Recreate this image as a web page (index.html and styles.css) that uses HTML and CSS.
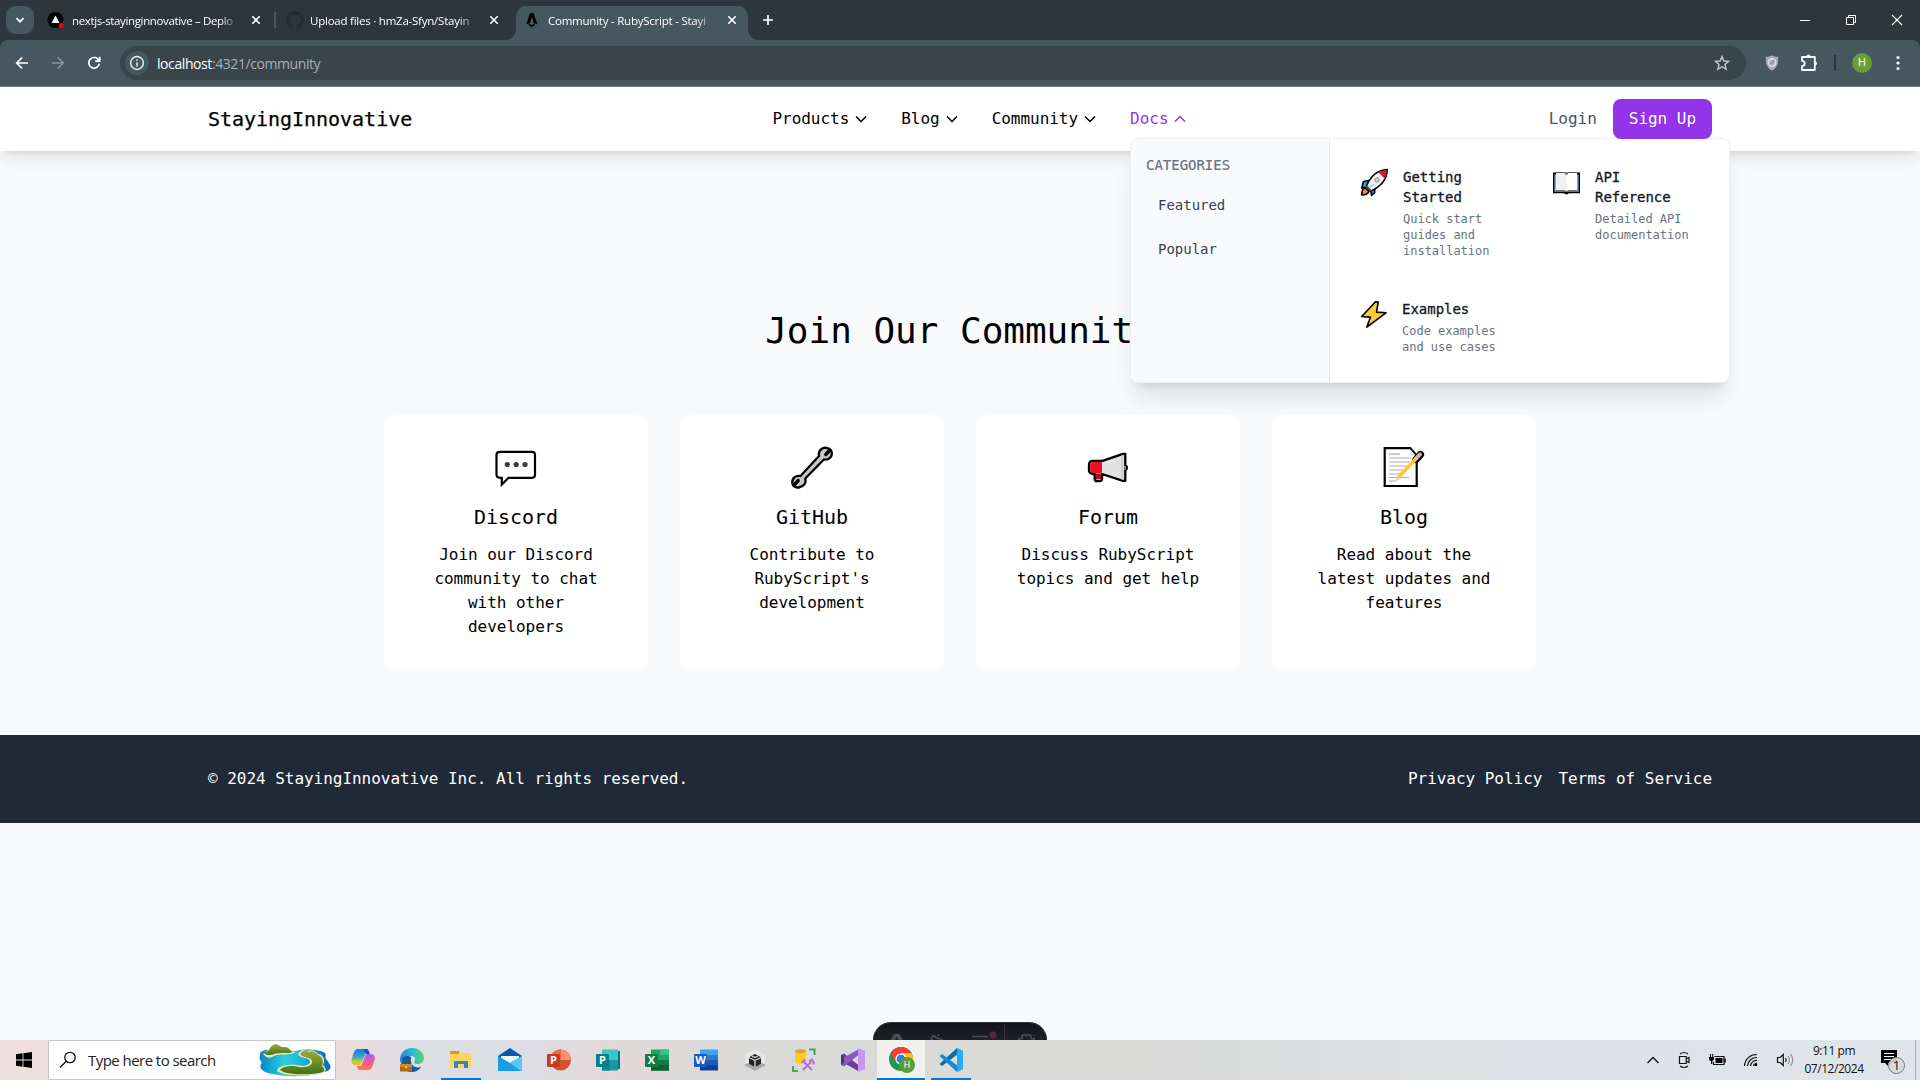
FILE: index.html
```html
<!DOCTYPE html>
<html lang="en">
<head>
<meta charset="utf-8">
<title>Community - RubyScript - StayingInnovative</title>
<link rel="stylesheet" href="styles.css">
</head>
<body>
<div class="tabstrip">
  <div class="tab-search"><svg width="12" height="12" viewBox="0 0 12 12"><path d="M2.5 4.2 6 7.7l3.500-3.500" fill="none" stroke="#fff" stroke-width="1.800"/></svg></div>
  <div class="tab tab-first">
    <svg width="18" height="18" viewBox="0 0 18 18"><circle cx="8.500" cy="9" r="8" fill="#000"/><path d="M8.500 4.500 12.500 12h-8z" fill="#fff"/><circle cx="14.200" cy="14.500" r="2.500" fill="#f00"/></svg>
    <span class="tab-title">nextjs-stayinginnovative – Deplo</span>
    <svg class="tab-x" width="10" height="10" viewBox="0 0 10 10"><path d="M1.300 1.300l7.400 7.400M8.700 1.300l-7.400 7.400" stroke="#fff" stroke-width="1.600"/></svg>
  </div>
  <i class="tab-sep"></i>
  <div class="tab tab-second">
    <svg width="18" height="18" viewBox="0 0 16 16"><path fill="#242b33" d="M8 0C3.580 0 0 3.580 0 8c0 3.540 2.290 6.530 5.470 7.590.4.070.55-.17.55-.38v-1.500c-2.010.37-2.530-.49-2.690-.94-.09-.23-.48-.94-.82-1.130-.28-.15-.68-.52-.01-.53.63-.01 1.080.58 1.230.82.72 1.210 1.870.87 2.330.66.070-.52.28-.87.51-1.070-1.780-.2-3.640-.89-3.640-3.950 0-.87.31-1.590.82-2.150-.08-.2-.36-1.020.08-2.120 0 0 .67-.21 2.200.82a7.400 7.400 0 0 1 4 0c1.530-1.040 2.200-.82 2.200-.82.44 1.100.16 1.920.08 2.120.51.56.82 1.270.82 2.150 0 3.070-1.870 3.750-3.650 3.950.29.25.54.73.54 1.480v2.200c0 .21.15.46.55.38A8 8 0 0 0 16 8c0-4.420-3.580-8-8-8z"/></svg>
    <span class="tab-title">Upload files · hmZa-Sfyn/Stayin</span>
    <svg class="tab-x" width="10" height="10" viewBox="0 0 10 10"><path d="M1.300 1.300l7.400 7.400M8.700 1.300l-7.400 7.400" stroke="#fff" stroke-width="1.600"/></svg>
  </div>
  <div class="tab tab-active">
    <svg width="14" height="16" viewBox="0 0 14 16"><path d="M5 1h3.500l4 11.500c-1.400-.7-2.400-1-3.700-1.200L6.800 4.800 4.900 11.300c-1.300.2-2.400.5-3.600 1.200z" fill="#000"/><path d="M3.700 12c1.500 1 4.500 1 6 0 .3 1.300-.6 2-1.400 2.500-.6-.5-1-.4-1.500 1.200-.4-1.400-1.400-1-1.900-1.700-.7-.4-1.400-1-1.200-2z" fill="#000"/></svg>
    <span class="tab-title">Community - RubyScript - Stayi</span>
    <svg class="tab-x" width="10" height="10" viewBox="0 0 10 10"><path d="M1.300 1.300l7.400 7.400M8.700 1.300l-7.400 7.400" stroke="#fff" stroke-width="1.600"/></svg>
  </div>
  <svg class="new-tab" width="12" height="12" viewBox="0 0 12 12"><path d="M6 1v10M1 6h10" stroke="#fff" stroke-width="1.700"/></svg>
  <div class="win-buttons">
    <svg width="12" height="12" viewBox="0 0 12 12"><path d="M1 6.500h10" stroke="#fff"/></svg>
    <svg width="12" height="12" viewBox="0 0 12 12"><path d="M1.500 3.500h7v7h-7zM3.500 3.500v-2h7v7h-2" fill="none" stroke="#fff"/></svg>
    <svg width="12" height="12" viewBox="0 0 12 12"><path d="M1 1l10 10M11 1 1 11" stroke="#fff" stroke-width="1.100"/></svg>
  </div>
</div>

<div class="toolbar-wrap"><div class="toolbar">
  <div class="nav-btns">
    <svg width="14" height="14" viewBox="0 0 14 14"><path d="M13 7H2M7.200 1.500 1.700 7l5.500 5.500" fill="none" stroke="#fff" stroke-width="1.700"/></svg>
    <svg width="14" height="14" viewBox="0 0 14 14"><path d="M1 7h11M6.800 1.500 12.300 7l-5.500 5.500" fill="none" stroke="#899499" stroke-width="1.700"/></svg>
    <svg width="14" height="14" viewBox="0 0 14 14"><path d="M12.300 7.700A5.300 5.300 0 1 1 11 3.200l1.500 1.500M12.700.8v4.400H8.200" fill="none" stroke="#fff" stroke-width="1.700"/></svg>
  </div>
  <div class="omnibox">
    <span class="site-info"><svg width="16" height="16" viewBox="0 0 16 16"><circle cx="8" cy="8" r="6.400" fill="none" stroke="#e8eced" stroke-width="1.500"/><path d="M8 7.200v4.200M8 4.400v1.600" stroke="#e8eced" stroke-width="1.500"/></svg></span>
    <span class="url"><b>localhost</b>:4321/community</span>
    <svg class="star" width="16" height="16" viewBox="0 0 16 16"><path d="M8 1.600l1.900 4.400 4.700.4-3.600 3.100 1.100 4.700L8 11.700l-4.100 2.500L5 9.500 1.400 6.400 6.100 6z" fill="none" stroke="#c3c7c9" stroke-width="1.400"/></svg>
  </div>
  <svg class="shield" width="14" height="16" viewBox="0 0 14 16"><path d="M7 .3c2 1.200 4 1.700 6.200 1.700C13.300 8 12.600 13 7 15.700 1.400 13 .7 8 .8 2 3 2 5 1.500 7 .3z" fill="#a3a8b8"/><circle cx="7" cy="7.500" r="3.900" fill="#b5bac8" stroke="#e4e6ed" stroke-width="1.200"/><path d="M4.500 9.300 9 5M6.500 9.500 9 7" stroke="#7c8298"/></svg>
  <svg class="ext" width="18" height="18" viewBox="0 0 18 18"><path d="M2 3h12.800v13H2v-3.800c3.600-.2 3.600-5.200 0-5.400z" fill="none" stroke="#fff" stroke-width="1.800" stroke-linejoin="round"/><path d="M6.500 2.500a2 2 0 0 1 4 0zM15 7.500a2 2 0 0 1 0 4z" fill="#fff"/></svg>
  <i class="tb-sep"></i>
  <span class="avatar">H</span>
  <svg class="dots" width="4" height="16" viewBox="0 0 4 16"><circle cx="2" cy="2.500" r="1.600" fill="#fff"/><circle cx="2" cy="8" r="1.600" fill="#fff"/><circle cx="2" cy="13.500" r="1.600" fill="#fff"/></svg>
</div></div>

<div class="page">
  <header class="site-header">
    <div class="container">
      <a class="brand">StayingInnovative</a>
      <nav class="main-nav">
        <a>Products<svg width="16" height="16" viewBox="0 0 16 16"><path d="M3 5.500l5 5 5-5"/></svg></a>
        <a>Blog<svg width="16" height="16" viewBox="0 0 16 16"><path d="M3 5.500l5 5 5-5"/></svg></a>
        <a>Community<svg width="16" height="16" viewBox="0 0 16 16"><path d="M3 5.500l5 5 5-5"/></svg></a>
        <div class="docs">
          <a class="open">Docs<svg width="16" height="16" viewBox="0 0 16 16"><path d="M3 10.500l5-5 5 5"/></svg></a>
          <div class="menu">
            <div class="menu-side">
              <h3>CATEGORIES</h3>
              <a>Featured</a>
              <a>Popular</a>
            </div>
            <div class="menu-grid">
              <div class="menu-item">
                <svg class="mi-icon" width="33" height="32" viewBox="0 0 33 32"><g stroke="#000" stroke-width="1.600" stroke-linejoin="round"><path d="M11 13.500 5.500 14.500 3.700 21l5-.2z" fill="#25a9e0"/><path d="M17 20.500 16.500 26l-3 2.500-.8-5.500z" fill="#1c8fd0"/><path d="M6.500 20.500C4 22 3.800 25 3.600 28c3.400 0 6.200-.8 7.400-3.500z" fill="#f7891c"/><path d="M29.200 2.500C19 3 12 10 8 20l4.300 4.300C22 20 29 13 29.200 2.500z" fill="#f4f4f4"/></g><path d="M28.500 3.200c-3 .2-5.700.8-8 2l5.700 6.100c1.400-2.500 2.200-5 2.300-8.100z" fill="#e81123"/><path d="M9 18.500l5 5-2 1L7.700 20z" fill="#4c4c4c"/><circle cx="19" cy="13" r="2.300" fill="#ccc" stroke="#999"/><path d="M15.500 17l-4 4" stroke="#25c0e8"/></svg>
                <div><h4>Getting Started</h4><p>Quick start guides and installation</p></div>
              </div>
              <div class="menu-item">
                <svg class="mi-icon" width="33" height="32" viewBox="0 0 33 32"><path d="M3 5.500h27v20.700H18.800l-1 1h-2.600l-1-1H3z" fill="#000"/><path d="M4.400 7.500h24.200v17.200H4.400z" fill="#69addf"/><path d="M6 5.500h8.500l2 1.200 2-1.200H27v18h-8.500l-2 1-2-1H6z" fill="#fff"/><path d="M6 5.500h8.500l2 1.200v17.800l-2-1H6z" fill="#f0f0f0"/><path d="M6 5.500h8.500l2 2.500 2-2.500H27M6 23.700h8.500l2 1 2-1H27" fill="none" stroke="#555"/></svg>
                <div><h4>API Reference</h4><p>Detailed API documentation</p></div>
              </div>
              <div class="menu-item">
                <svg class="mi-icon" width="32" height="32" viewBox="0 0 32 32"><path d="M17.500 2.800 3.700 17.500l8.800.6-3.700 10L28 13.800l-9.500-.7 1.700-10z" fill="#ffc83d" stroke="#000" stroke-width="1.600" stroke-linejoin="round"/></svg>
                <div><h4>Examples</h4><p>Code examples and use cases</p></div>
              </div>
            </div>
          </div>
        </div>
      </nav>
      <div class="auth"><a class="login">Login</a><a class="signup">Sign Up</a></div>
    </div>
  </header>

  <main class="hero">
    <h1>Join Our Community</h1>
    <div class="cards">
      <div class="card">
        <svg width="48" height="48" viewBox="0 0 48 48"><path d="M8 7.800h32q3 0 3 3v20q0 3-3 3H16.500L9.800 40.500v-6.700H8q-3.500 0-3.500-3v-20q0-3 3.500-3z" fill="#fff" stroke="#000" stroke-width="2.200"/><g fill="#3b3b3b"><circle cx="15.300" cy="20.500" r="2.600"/><circle cx="24.200" cy="20.500" r="2.600"/><circle cx="33" cy="20.500" r="2.600"/></g></svg>
        <h2>Discord</h2><p>Join our Discord community to chat with other developers</p>
      </div>
      <div class="card">
        <svg width="48" height="48" viewBox="0 0 48 48"><path d="M39.500 4.200C34.500 2.500 30 6.500 31 12L12.500 32C7.500 31 4 34.500 4.300 39c.4 3 3.500 5 6.500 4.500 4.700-.8 7.700-4 6.500-9L35.800 15.500c5 1 8.700-3 7.900-7.300-.4-2-2-3.400-4.200-4z" fill="#c8c8c8" stroke="#000" stroke-width="2.300" stroke-linejoin="round"/><path d="M41.500 6.500 37.800 10.500M6.500 40.500l3.700-4" stroke="#000" stroke-width="3.400" stroke-linecap="round"/></svg>
        <h2>GitHub</h2><p>Contribute to RubyScript's development</p>
      </div>
      <div class="card">
        <svg width="48" height="48" viewBox="0 0 48 48"><path d="M9 16.800h9.500L39 9.800h2.300v11.800q3.500 1.700 0 4.700v10.500H39L18 30v5.500q-.4 1.700-2.300 1.700H13q-2.300 0-2.300-2.200V30H9q-4-1-4-3.600V21q0-4.200 4-4.200z" fill="#e2e2e2" stroke="#000" stroke-width="2.300" stroke-linejoin="round"/><path d="M9.300 18H18v11H9.300Q6.200 28.500 6.200 25v-3.500q0-3.500 3.100-3.500z" fill="#e81123"/><path d="M12 29.500h5v5.800h-5z" fill="#a80f22"/><path d="M38.200 11.500v24" stroke="#ccc" stroke-width="2"/><path d="M41 22v4" stroke="#777" stroke-width="2"/></svg>
        <h2>Forum</h2><p>Discuss RubyScript topics and get help</p>
      </div>
      <div class="card">
        <svg width="48" height="48" viewBox="0 0 48 48"><path d="M4.700 4.200h25.500l6.500 7.400V42H4.700z" fill="#fff" stroke="#000" stroke-width="2.200"/><path d="M30 5v6.800h6" fill="#e5e5e5"/><path d="M9 10.200h11M9 14h22M9 18h21M9 22h19M9 26h17M9 30h14M9 33.500h11M9 37h7" stroke="#aaa" stroke-width="1.200"/><path d="M29 33.500h-8" stroke="#aaa"/><path d="m36 15.500 4.500-5" stroke="#000" stroke-width="7.200" stroke-linecap="round"/><path d="M18 33.800 37 13.500" stroke="#ffc83d" stroke-width="3.900"/><path d="m35.800 14.800 2.400-2.600" stroke="#c5c5c5" stroke-width="3.900"/><path d="m38.200 12.200 1.800-1.900" stroke="#f0a1a3" stroke-width="3.900" stroke-linecap="round"/><path d="m15.600 37.300.9-4.600 3.200 3z" fill="#f5cba8"/></svg>
        <h2>Blog</h2><p>Read about the latest updates and features</p>
      </div>
    </div>
  </main>

  <footer class="site-footer"><div class="container">
    <span>© 2024 StayingInnovative Inc. All rights reserved.</span>
    <div class="legal"><a>Privacy Policy</a><a>Terms of Service</a></div>
  </div></footer>

  <div class="dev-bar">
    <svg width="174" height="18" viewBox="0 0 174 18"><path d="M17 18l3.800-7h5.600l4 7h-4.600l-2.200-4-2.300 4z" fill="#4c4e53"/><g fill="none" stroke="#4c4e53" stroke-width="1.500"><path d="M61 18l-3-2 1.500-3 12 5M61 12l1.500 2M65 11v2"/><path d="M99 13.500h16M109 17.500h7M145 18l1-2.500 2 .5 1.500-1.500-.5-2 3-1 1.500 1.500 1.500-1.500 3 1-.5 2 1.500 1.500 2-.5 1 2.500"/></g><circle cx="120" cy="12" r="3.500" fill="#522a37"/><path d="M131.500 1v17" stroke="#303139"/></svg>
  </div>
</div>

<div class="taskbar">
  <div class="start"><svg width="16" height="16" viewBox="0 0 16 16"><path d="M0 2.200 6.600 1.300v6.300H0zM7.400 1.200 16 0v7.600H7.400zM0 8.400h6.600v6.300L0 13.800zM7.400 8.400H16V16l-8.600-1.200z"/></svg></div>
  <div class="search">
    <svg width="18" height="18" viewBox="0 0 18 18"><circle cx="11" cy="6.500" r="5.200" fill="none" stroke="#111" stroke-width="1.300"/><path d="M7.300 10.300 1 16.500" stroke="#111" stroke-width="1.400"/></svg>
    <span>Type here to search</span>
    <svg class="island" width="72" height="34" viewBox="0 0 72 34"><defs><linearGradient id="sea"><stop offset="0" stop-color="#0a83c4"/><stop offset=".35" stop-color="#2bd0e0"/><stop offset=".65" stop-color="#16afd3"/><stop offset="1" stop-color="#0968c0"/></linearGradient><linearGradient id="hill" x2="0" y2="1"><stop stop-color="#a3ab34"/><stop offset="1" stop-color="#3e7317"/></linearGradient></defs><path d="M1 12C0 7 8 6 17 7l20 1c9-3 25-1 29 2 2 3-1 4 2 7 5 7 5 10-3 12-8 4-36 6-51 2C5 30-2 25 3 20c-2-3-3-5-2-8z" fill="url(#sea)"/><path d="M4 11c5-1 6-9 12-9 4 0 6 4 9 2 6 0 6 5 12 5-6 4-17 1-22 4-4 3-8 2-11-2z" fill="#eee0b7"/><path d="M5 10c6 0 6-9 12-9 4 1 5 4 9 3 4 0 5 4 8 5-6 2-14 0-19 2-4 2-8 1-10-1z" fill="url(#hill)"/><path d="M39 11c4-6 8-4 9-3 5-2 9 0 11 3 5 0 8 6 5 11 5 5 3 8-4 9-13 3-36 2-42-3 0-6 14-7 20-6 7 2 14 0 13-4-1-4-10-2-12-7z" fill="#eee0b7"/><path d="M41 11c4-5 6-4 8-2 4-2 8 0 10 3 4 1 6 6 4 11 4 4 3 6-3 7-12 2-33 2-39-3 3-4 13-5 19-3 8 1 14-2 13-6-1-4-9-3-12-7z" fill="url(#hill)"/></svg>
  </div>
  <div class="apps">
    <div class="app"><svg viewBox="0 0 24 24"><defs><linearGradient id="cp1" x2="0" y2="1"><stop stop-color="#107ee8"/><stop offset=".5" stop-color="#37a7c5"/><stop offset=".75" stop-color="#b9cf3a"/><stop offset="1" stop-color="#f5c013"/></linearGradient><linearGradient id="cp2" x2="0" y2="1"><stop stop-color="#a362ef"/><stop offset=".5" stop-color="#ed5a99"/><stop offset="1" stop-color="#fb7d42"/></linearGradient></defs><path d="M7 1h8c2 0 3 2 3.500 4l-4 .5-5 11.500H4c-4 0-4-4-3-7L3 4c.7-2 2-3 4-3z" fill="url(#cp1)"/><path d="M12 1h4q2 1 2.800 5H15z" fill="#1952b8"/><path d="M15 6h4.500c4 0 5 3 4 6l-2 6c-.8 3-2.500 4-4.500 4H9c-2 0-2.800-2-3-4h4z" fill="url(#cp2)"/></svg></div>
    <div class="app"><svg viewBox="0 0 24 24"><defs><linearGradient id="eg" x2="1"><stop stop-color="#1687d4"/><stop offset=".5" stop-color="#28bcd3"/><stop offset="1" stop-color="#58d669"/></linearGradient></defs><path d="M0 12C0 5 5 0 12 0s12 4.500 12 10c0 4-3 6-6.500 6-4 0-3.500-2-2.500-4s-1-4-4-4C4 8 1 10 0 16z" fill="url(#eg)"/><path d="M2 10c5-4 10-2 9 1-1 5 3 10 10 8-3 5-9 6-14 4C2 21 0 15 2 10z" fill="#155da9"/><path d="M0 16h12v7.500H0z" fill="#b36a12"/><path d="M0 16h12v3H0z" fill="#d18a25"/><path d="M4 16v-1.500h4V16" stroke="#7b430a" fill="none"/><circle cx="6" cy="19.500" r="1" fill="#ffe27a"/></svg></div>
    <div class="app running"><svg viewBox="0 0 24 24"><path d="M1 3h9l2 2h10v15H1z" fill="#ffd55d"/><path d="M1 3h9v3H1z" fill="#d69816"/><path d="M5 20v-7h14v7h-4v-4H9v4z" fill="#2f85cf"/></svg></div>
    <div class="app"><svg viewBox="0 0 24 24"><path d="M0 8 12 0l12 8v4H0z" fill="#0b59ad"/><path d="M3 8h18v7H3z" fill="#f4f4f4"/><path d="M0 8l12 7L24 8v15H0z" fill="#1a9de8"/><path d="m24 8-12 7 11 8h1z" fill="#53c9f5"/></svg></div>
    <div class="app"><svg viewBox="0 0 24 24"><circle cx="13.500" cy="12" r="10.500" fill="#d35230"/><path d="M13.500 1.500A10.500 10.500 0 0 1 24 12H13.500z" fill="#ff8f6b"/><path d="M3 12A10.500 10.500 0 0 1 13.500 1.500V12z" fill="#ed6c47"/><rect y="6" width="13" height="13" rx="1" fill="#c43e1c"/><text x="6.500" y="16" class="lt">P</text></svg></div>
    <div class="app"><svg viewBox="0 0 24 24"><path d="M20 3h4v18h-4z" fill="#03787c"/><path d="M6 1.500h16v11H6z" fill="#37c6d0"/><path d="M6 12h16v10.500H6z" fill="#1a9ba1"/><path d="M6 12h8v10.500H6z" fill="#058f92"/><rect y="6" width="13" height="13" rx="1" fill="#038387"/><text x="6.500" y="16" class="lt">P</text></svg></div>
    <div class="app"><svg viewBox="0 0 24 24"><path d="M6 1.500h18v21H6z" fill="#21a366"/><path d="M15 1.500h9V7h-9z" fill="#33c481"/><path d="M6 12h18v10.500H6z" fill="#107c41"/><path d="M6 17h18v5.500H6z" fill="#185c37"/><rect y="6" width="13" height="13" rx="1" fill="#107c41"/><text x="6.500" y="16" class="lt">X</text></svg></div>
    <div class="app"><svg viewBox="0 0 24 24"><path d="M6 1.500h18V7H6z" fill="#41a5ee"/><path d="M6 7h18v5H6z" fill="#2b7cd3"/><path d="M6 12h18v5H6z" fill="#185abd"/><path d="M6 17h18v5.500H6z" fill="#103f91"/><rect y="6" width="13" height="13" rx="1" fill="#185abd"/><text x="6.500" y="16" class="lt">W</text></svg></div>
    <div class="app"><svg viewBox="0 0 24 24"><path d="m12 1 10 5.500v11L12 23 2 17.500v-11z" fill="#e6e6e6"/><path d="m2 16 10-2 10 2v1.500L12 23 2 17.500z" fill="#a7a7a7"/><path d="m12 6 6 3.300v6.400L12 19l-6-3.300V9.300z" fill="#222"/><path d="m12 12.500 6-3M12 12.500V19M12 12.500l-6-3M9 8l3 1.500L15 8" stroke="#ddd" stroke-width="1.300" fill="none"/></svg></div>
    <div class="app"><svg viewBox="0 0 24 24"><path d="M3 3v11c0 2 11 2 11 0V3z" fill="#ffce1f"/><ellipse cx="8.500" cy="3.200" rx="5.500" ry="2" fill="#e79d3c"/><path d="M17 1.500h5.500V7M1 18v5h5" fill="none" stroke="#4ea656" stroke-width="2.200"/><path d="m11 13 9 9M19.500 13.500 11 22M9.500 14.500l4-3M17 13l3-1.500 2 3-1 2" fill="none" stroke="#b968dc" stroke-width="1.800"/></svg></div>
    <div class="app"><svg viewBox="0 0 24 24"><path d="m0 7 3-1.500 15 12v6L3 15l-3 2z" fill="#6b3c9c"/><path d="m0 17 3 1.500 15-12V1L3 9.500 0 7z" fill="#8c58bd"/><path d="m17 0 7 3v18l-7 3z" fill="#c597f5"/><path d="m0 7 3 2.500v5L0 17z" fill="#50336d"/></svg></div>
    <div class="app running current"><svg viewBox="0 0 26 26"><circle cx="12" cy="12" r="12" fill="#20994f"/><path d="M1.600 6A12 12 0 0 1 22.400 6H12l-5.200 9z" fill="#e94234"/><path d="M22.400 6A12 12 0 0 1 12 24l5.200-9L12 6z" fill="#fbc116"/><circle cx="12" cy="12" r="5.600" fill="#fff"/><circle cx="12" cy="12" r="4.400" fill="#2f7de9"/><circle cx="18" cy="18" r="8" fill="#5e9a35"/><text x="18" y="21.300" class="lt lt-h">H</text></svg></div>
    <div class="app running"><svg viewBox="0 0 24 24"><path d="m18 0 6 2.700v18.600L18 24z" fill="#28a9f2"/><path d="M18 0v6.800L3 18 .5 16z" fill="#0c6cae"/><path d="M18 24v-6.800L3 6 .5 8z" fill="#128bd2"/></svg></div>
  </div>
  <div class="tray">
    <svg width="14" height="14" viewBox="0 0 14 14"><path d="M1.500 10 7 4.500l5.500 5.500" fill="none" stroke="#111" stroke-width="1.300"/></svg>
    <svg width="14" height="18" viewBox="0 0 14 18"><path d="M2.500 5.500h6.700v7H2.500zM9.200 8l2.800-1.500v5L9.200 10M3 3q4-3 8 0M3 15q4 3 8 0" fill="none" stroke="#111" stroke-width="1.200"/></svg>
    <svg width="18" height="14" viewBox="0 0 18 14"><path d="M6.500 3.500H16v8H5.500V9M16 6h1.200v3H16" fill="none" stroke="#111" stroke-width="1.200"/><path d="M7.500 5h7v5h-7zM1 4h5v2q0 2-2.500 2T1 6zM3 8h1.300v3H3zM2 1h1v3H2zM4.200 1h1v3h-1z"/></svg>
    <svg width="16" height="16" viewBox="0 0 16 16"><g fill="none" stroke="#111" stroke-width="1.200"><path d="M1.500 14A12 12 0 0 1 14 2.500M4.500 14A9 9 0 0 1 14 5.500M7.500 14A6 6 0 0 1 14 8.500M10.500 14A3 3 0 0 1 14 11.500"/></g><circle cx="13" cy="13" r="1.300"/></svg>
    <svg width="18" height="16" viewBox="0 0 18 16"><path d="M1.500 5.500h2.800l3-3v11l-3-3H1.500z" fill="none" stroke="#111" stroke-width="1.200"/><path d="M9.500 6q1.500 2 0 4" fill="none" stroke="#111" stroke-width="1.200"/><path d="M12 4q3 4 0 8M14.500 2q4.500 6 0 12" fill="none" stroke="#8a8f92" stroke-width="1.200"/></svg>
  </div>
  <div class="clock"><span>9:11 pm</span><span>07/12/2024</span></div>
  <svg class="notif" width="26" height="26" viewBox="0 0 26 26"><path d="M1 1h16v13H8v3l-3-3H1z"/><path d="M4 4.500h10M4 7.500h10M4 10.500h7" stroke="#fff" stroke-width="1.200"/><circle cx="16.500" cy="16.500" r="8" fill="#d6dadc" fill-opacity=".93" stroke="#777"/><text x="16.500" y="21" class="count">1</text></svg>
  <i class="peek"></i>
</div>
</body>
</html>
```
FILE: styles.css
```css
* { box-sizing: border-box; }
body { margin: 0; width: 1920px; height: 1080px; overflow: hidden; display: flex; flex-direction: column; background: #f9fafc; font-family: "DejaVu Sans Mono", monospace; }
h1, h2, h3, h4, p { margin: 0; font-weight: 400; }
svg { display: block; flex: none; }

/* browser chrome */
.tabstrip { height: 40px; flex: none; background: #2c363c; display: flex; align-items: center; color: #fff; font: 12px "Open Sans", sans-serif; }
.tab-search { width: 28px; height: 28px; margin-left: 6px; border-radius: 9px; background: #46575f; display: flex; align-items: center; justify-content: center; }
.tab { display: flex; align-items: center; }
.tab-title { width: 168px; white-space: nowrap; font-size: 11.5px; letter-spacing: -0.36px; line-height: 18px; padding-top: 1px; -webkit-mask-image: linear-gradient(90deg, #000 88%, transparent); mask-image: linear-gradient(90deg, #000 88%, transparent); }
.tab-second .tab-title { letter-spacing: -0.23px; }
.tab-x { margin-left: 11px; }
.tab-first { margin-left: 13px; }
.tab-first .tab-title { margin-left: 7px; }
.tab-sep { width: 2px; height: 16px; background: #46575f; margin-left: 13px; }
.tab-second { margin-left: 10px; }
.tab-second .tab-title { margin-left: 6px; }
.tab-active { position: relative; width: 232px; height: 34px; align-self: flex-end; background: #46575f; border-radius: 10px 10px 0 0; margin-left: 17px; padding-left: 9px; }
.tab-active .tab-title { margin-left: 9px; letter-spacing: -0.23px; }
.tab-active .tab-x { margin-left: 11px; }
.tab-active > * { margin-top: -6px; }
.tab-active::before, .tab-active::after { content: ""; position: absolute; bottom: 0; width: 10px; height: 10px; }
.tab-active::before { left: -10px; background: radial-gradient(circle at 0 0, transparent 9.5px, #46575f 10px); }
.tab-active::after { right: -10px; background: radial-gradient(circle at 100% 0, transparent 9.5px, #46575f 10px); }
.new-tab { margin-left: 14px; }
.win-buttons { margin-left: auto; display: flex; gap: 34px; padding-right: 17px; }
.toolbar-wrap { flex: none; height: 47px; background: #2c363c; }
.toolbar { height: 47px; background: #46575f; border-bottom: 1px solid #6b7a82; border-radius: 8px 8px 0 0; display: flex; align-items: center; font-family: "Open Sans", sans-serif; }
.nav-btns { display: flex; gap: 22px; padding-left: 15px; width: 120px; }
.omnibox { width: 1626px; height: 34px; border-radius: 17px; background: #39444b; display: flex; align-items: center; padding: 0 16px 0 5px; }
.site-info { width: 24px; height: 24px; border-radius: 50%; background: #46575f; display: flex; align-items: center; justify-content: center; }
.url { margin-left: 8px; font-size: 14px; letter-spacing: -0.42px; color: #a9b0b4; }
.url b { font-weight: 400; color: #fff; }
.star { margin-left: auto; }
.shield { margin-left: 19px; }
.ext { margin-left: 21px; }
.tb-sep { width: 2px; height: 16px; background: #2c363c; margin-left: 16px; }
.avatar { width: 20px; height: 20px; margin-left: 16px; border-radius: 50%; background: #689f38; color: #fff; font: 11px/20px Roboto, sans-serif; text-align: center; }
.dots { margin-left: 24px; }

/* site */
.page { flex: 1; min-height: 0; position: relative; letter-spacing: -0.002em; }
.container { width: 1504px; margin: 0 auto; display: flex; align-items: center; justify-content: space-between; }
.site-header { position: relative; z-index: 2; height: 64px; background: #fff; box-shadow: 0 10px 15px -3px rgb(0 0 0 / .1), 0 4px 6px -4px rgb(0 0 0 / .1); }
.site-header .container { height: 64px; }
.brand { font-size: 20px; -webkit-text-stroke: .25px #000; }
.main-nav { display: flex; gap: 32px; font-size: 16px; line-height: 24px; }
.main-nav > a, .open { display: flex; align-items: center; }
.main-nav svg:not(.mi-icon) { margin-left: 4px; fill: none; stroke: currentColor; stroke-width: 1.5; }
.docs { position: relative; }
.open { color: #9333ea; }
.auth { position: relative; z-index: 2; display: flex; justify-content: flex-end; align-items: center; gap: 16px; line-height: 24px; }
.login { color: #4b5563; }
.signup { color: #fff; background: #9333ea; border-radius: 8px; padding: 8px 16px; }
.menu { position: absolute; left: 0; top: 31px; width: 600px; height: 245px; border: 1px solid #eff0f2; border-radius: 8px; background: #fff; display: flex; overflow: hidden; box-shadow: 0 20px 25px -5px rgb(0 0 0 / .1), 0 8px 10px -6px rgb(0 0 0 / .1); }
.menu-side { width: 199px; flex: none; padding: 16px 15px; background: #f9fafc; border-right: 1px solid #e5e7eb; font-size: 14px; line-height: 20px; }
.menu-side h3 { font-size: 14px; color: #6b7280; margin-bottom: 12px; -webkit-text-stroke: .2px #6b7280; }
.menu-side a { display: block; padding: 8px 12px; margin-bottom: 8px; color: #374151; }
.menu-grid { flex: 1; padding: 16px 15px 15px 16px; display: grid; grid-template-columns: 1fr 1fr; gap: 16px; align-content: start; }
.menu-item { display: flex; align-items: flex-start; gap: 12px; padding: 12px; }
.menu-item h4 { font-size: 14px; line-height: 20px; color: #111827; -webkit-text-stroke: .3px #111827; }
.menu-item p { margin-top: 4px; font-size: 12px; line-height: 16px; color: #6b7280; }
.hero { padding: 160px 0 64px; }
.hero h1 { font-size: 36px; line-height: 40px; text-align: center; margin-bottom: 64px; }
.cards { width: 1152px; margin: 0 auto; display: grid; grid-template-columns: repeat(4, 1fr); gap: 32px; }
.card { height: 256px; background: #fff; border-radius: 12px; padding: 32px; text-align: center; }
.card svg { margin: -3px auto 11px; }
.card h2 { font-size: 20px; line-height: 28px; margin-bottom: 12px; }
.card p { font-size: 16px; line-height: 24px; }
.site-footer { background: #1f2937; color: #fff; padding: 32px 0; line-height: 24px; }
.legal { display: flex; gap: 16px; }
.dev-bar { position: absolute; left: 873px; bottom: 0; width: 174px; height: 18px; overflow: hidden; border-radius: 20px 20px 0 0; background: linear-gradient(#13151a, #1e2026); border-top: 1px solid #343841; }

/* taskbar */
.taskbar { flex: none; height: 40px; display: flex; align-items: center; background: linear-gradient(90deg, #eddfdd 0, #ecdcda 340px, #dddde4 400px, #dddde5 530px, #e2d9d8 610px, #dbdad9 720px, #dadad8 1100px, #dce2e5 1500px, #dfe6e9 1920px); font-family: "Open Sans", sans-serif; }
.start { width: 48px; display: flex; justify-content: center; }
.search { width: 288px; height: 40px; background: #fff; border: 1px solid #c5c8ca; display: flex; align-items: center; padding: 0 4px 0 10px; color: #222; font-size: 15px; }
.search span { margin-left: 11px; letter-spacing: -0.55px; }
.island { margin-left: auto; }
.apps { display: flex; align-self: stretch; margin-left: 2px; }
.app { width: 49px; display: flex; align-items: center; justify-content: center; border-bottom: 2px solid transparent; background-clip: padding-box; }
.app svg { width: 24px; height: 24px; margin-top: 2px; }
.running { width: 40px; margin: 0 4px 0 5px; border-color: #0078d7; }
.current { width: 48px; margin: 0 1px 0 0; background-color: #f0f0ef; }
.current svg { width: 26px; height: 26px; margin-left: 2px; }
.lt { fill: #fff; font: bold 11px "Open Sans", sans-serif; text-anchor: middle; }
.lt-h { font: 9px Roboto, sans-serif; }
.tray { margin-left: auto; display: flex; align-items: center; gap: 17px; }
.clock { width: 64px; margin-left: 8px; display: flex; flex-direction: column; align-items: center; font-size: 12px; line-height: 18px; letter-spacing: -0.45px; color: #111; white-space: nowrap; }
.notif { margin: 3px 0 0 14px; }
.count { font: 13px "Open Sans", sans-serif; text-anchor: middle; fill: #111; }
.peek { width: 1px; height: 40px; background: #a9b0b3; margin: 0 4px 0 9px; }
```
